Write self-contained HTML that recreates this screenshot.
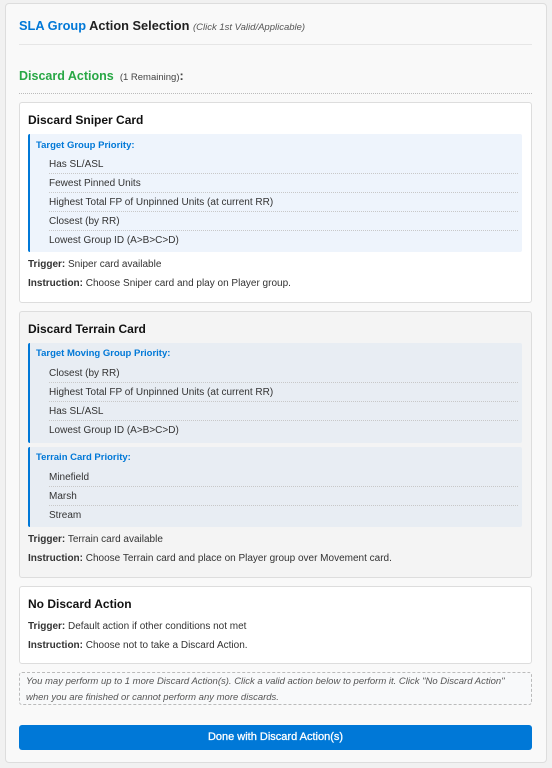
<!DOCTYPE html>
<html><head><meta charset="utf-8"><style>
*{box-sizing:border-box;margin:0;padding:0}
body{width:552px;height:768px;background:#f1f1f1;font-family:"Liberation Sans",Arial,sans-serif;position:relative;overflow:hidden;color:#333}
.a{position:absolute}
#outer{left:5px;top:3px;width:542px;height:760px;background:#f9f9f9;border:1px solid #ddd;border-radius:4px}
.t{white-space:nowrap;font-size:10px;color:#333;padding-top:1px}
.card{left:19px;width:513px;border:1px solid #ddd;border-radius:3px}
.h{font-size:12px;font-weight:bold;color:#111;white-space:nowrap}
.box{left:28px;width:494px;border-left:2px solid #0078d7;border-radius:2px}
.bh{font-size:9.5px;font-weight:bold;color:#0078d7;white-space:nowrap}
.sep{left:49px;width:469px;border-top:1px dotted #c8c8c8;height:0}
b{color:#333}
</style></head><body>
<div id="outer" class="a"></div>
<div class="a" style="left:19px;top:18px;font-size:12.8px;font-weight:bold;white-space:nowrap;color:#222"><span style="color:#0078d7">SLA Group</span> Action Selection <span style="font-size:9.5px;font-weight:normal;font-style:italic;color:#555">(Click 1st Valid/Applicable)</span></div>
<div class="a" style="left:19px;top:44px;width:513px;border-top:1px solid #e6e6e6"></div>
<div class="a" style="left:19px;top:69px;font-size:12.5px;font-weight:bold;color:#28a745;white-space:nowrap">Discard Actions <span style="font-size:9.5px;font-weight:normal;color:#444">&nbsp;(1 Remaining)</span><span style="color:#444">:</span></div>
<div class="a" style="left:19px;top:93px;width:513px;border-top:1px dotted #bbb"></div>

<div class="a card" style="top:102px;height:201px;background:#fff"></div>
<div class="a h" style="left:28px;top:113px">Discard Sniper Card</div>
<div class="a box" style="top:134px;height:118px;background:#eef4fc"></div>
<div class="a bh" style="left:36px;top:140px">Target Group Priority:</div>
<div class="a t" style="left:49px;top:158px">Has SL/ASL</div>
<div class="a sep" style="top:173px"></div>
<div class="a t" style="left:49px;top:177px">Fewest Pinned Units</div>
<div class="a sep" style="top:192px"></div>
<div class="a t" style="left:49px;top:196px">Highest Total FP of Unpinned Units (at current RR)</div>
<div class="a sep" style="top:211px"></div>
<div class="a t" style="left:49px;top:215px">Closest (by RR)</div>
<div class="a sep" style="top:230px"></div>
<div class="a t" style="left:49px;top:234px">Lowest Group ID (A&gt;B&gt;C&gt;D)</div>
<div class="a t" style="left:28px;top:258px"><b>Trigger:</b> Sniper card available</div>
<div class="a t" style="left:28px;top:277px"><b>Instruction:</b> Choose Sniper card and play on Player group.</div>

<div class="a card" style="top:311px;height:267px;background:#f4f4f4"></div>
<div class="a h" style="left:28px;top:322px">Discard Terrain Card</div>
<div class="a box" style="top:343px;height:100px;background:#e8edf3"></div>
<div class="a bh" style="left:36px;top:348px">Target Moving Group Priority:</div>
<div class="a t" style="left:49px;top:367px">Closest (by RR)</div>
<div class="a sep" style="top:382px"></div>
<div class="a t" style="left:49px;top:386px">Highest Total FP of Unpinned Units (at current RR)</div>
<div class="a sep" style="top:401px"></div>
<div class="a t" style="left:49px;top:405px">Has SL/ASL</div>
<div class="a sep" style="top:420px"></div>
<div class="a t" style="left:49px;top:424px">Lowest Group ID (A&gt;B&gt;C&gt;D)</div>
<div class="a box" style="top:447px;height:80px;background:#e8edf3"></div>
<div class="a bh" style="left:36px;top:452px">Terrain Card Priority:</div>
<div class="a t" style="left:49px;top:471px">Minefield</div>
<div class="a sep" style="top:486px"></div>
<div class="a t" style="left:49px;top:490px">Marsh</div>
<div class="a sep" style="top:505px"></div>
<div class="a t" style="left:49px;top:509px">Stream</div>
<div class="a t" style="left:28px;top:533px"><b>Trigger:</b> Terrain card available</div>
<div class="a t" style="left:28px;top:552px"><b>Instruction:</b> Choose Terrain card and place on Player group over Movement card.</div>

<div class="a card" style="top:586px;height:78px;background:#fff"></div>
<div class="a h" style="left:28px;top:597px">No Discard Action</div>
<div class="a t" style="left:28px;top:620px"><b>Trigger:</b> Default action if other conditions not met</div>
<div class="a t" style="left:28px;top:639px"><b>Instruction:</b> Choose not to take a Discard Action.</div>

<div class="a" style="left:19px;top:672px;width:513px;height:33px;border:1px dashed #bbb;border-radius:3px;background:#f8f9fa"></div>
<div class="a" style="left:26px;top:674px;width:490px;font-size:9.5px;font-style:italic;color:#555;line-height:16px">You may perform up to 1 more Discard Action(s). Click a valid action below to perform it. Click "No Discard Action" when you are finished or cannot perform any more discards.</div>

<div class="a" style="left:19px;top:725px;width:513px;height:25px;background:#0078d7;border-radius:3px;color:#fff;font-size:11px;text-align:center;line-height:25px;-webkit-text-stroke:0.3px #fff">Done with Discard Action(s)</div>
</body></html>
